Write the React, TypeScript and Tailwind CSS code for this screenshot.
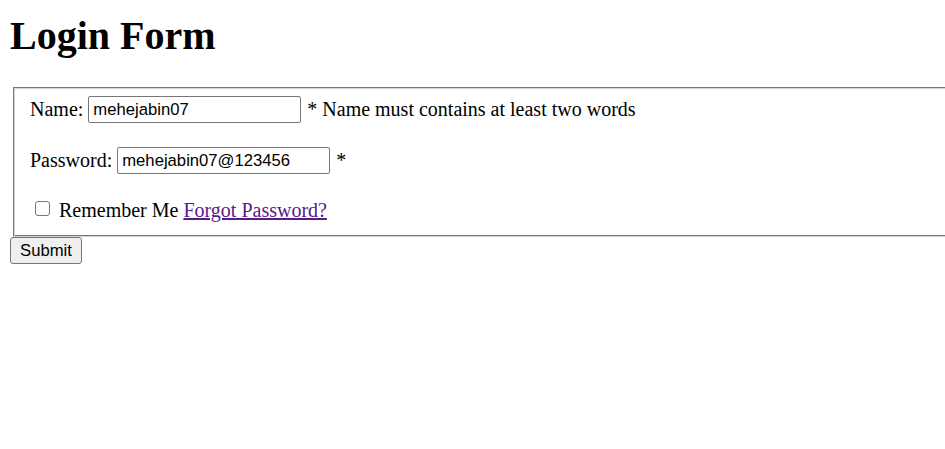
import React from "react";

export default function App() {
  return (
    <div className="w-[945px] h-[449px] overflow-hidden bg-white text-black pl-[10px] pt-[14px] font-['Liberation_Serif',serif]">
      <h1 className="text-[40px] leading-[44px] font-bold">Login Form</h1>
      <div className="mt-[29px] ml-[3px] w-[1000px] h-[150px] border border-t-[#767676] border-l-[#767676] border-b-[#d4d4d4] border-r-[#d4d4d4] shadow-[inset_1px_1px_0_#d4d4d4,inset_-1px_-1px_0_#767676] pl-[16px] pt-[8px] text-[20px]">
        <div className="flex items-center h-[27px]">
          <span className="leading-[23px]">Name:</span>
          <input
            readOnly
            value="mehejabin07"
            className="ml-[5px] w-[213px] h-[27px] border border-[#767676] rounded-[2px] px-[4px] text-[16.67px] font-['Liberation_Sans',Arial,sans-serif] outline-none"
          />
          <span className="ml-[6px] leading-[23px]">* Name must contains at least two words</span>
        </div>
        <div className="flex items-center h-[27px] mt-[24px]">
          <span className="leading-[23px]">Password:</span>
          <input
            readOnly
            value="mehejabin07@123456"
            className="ml-[5px] w-[213px] h-[27px] border border-[#767676] rounded-[2px] px-[4px] text-[16.67px] font-['Liberation_Sans',Arial,sans-serif] outline-none"
          />
          <span className="ml-[6px] leading-[23px]">*</span>
        </div>
        <div className="flex items-start h-[23px] mt-[25px]">
          <span className="ml-[5px] mt-[2px] w-[15px] h-[15px] border border-[#767676] rounded-[3px] bg-white"></span>
          <span className="ml-[9px] leading-[23px]">Remember Me</span>
          <a href="#" className="ml-[5px] leading-[23px] text-[#551a8b] underline">Forgot Password?</a>
        </div>
      </div>
      <button className="block w-[72px] h-[27px] bg-[#efefef] border border-[#767676] rounded-[3px] text-[16.67px] font-['Liberation_Sans',Arial,sans-serif] text-black">
        Submit
      </button>
    </div>
  );
}
